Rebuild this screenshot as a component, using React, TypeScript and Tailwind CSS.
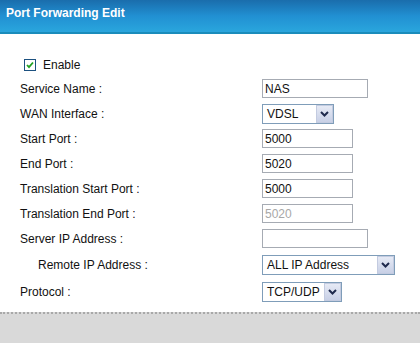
import React from 'react';

const Arrow = () => (
  <div className="w-[17px] h-[18px] border border-[#c3cbe0] bg-gradient-to-b from-[#e6eaf5] to-[#c8d0e6] flex items-center justify-center shrink-0">
    <svg width="9" height="6" viewBox="0 0 9 6">
      <path d="M1 1 L4.5 4.5 L8 1" fill="none" stroke="#1f2a4d" strokeWidth="2" />
    </svg>
  </div>
);

const Sel = ({ value, w }: { value: string; w: string }) => (
  <div className={`h-[20px] ${w} border border-[#7f9db9] bg-white flex items-center justify-between pl-[4px]`}>
    <span className="text-[12px] text-[#111]">{value}</span>
    <Arrow />
  </div>
);

const Inp = ({ value = '', w, disabled = false }: { value?: string; w: string; disabled?: boolean }) => (
  <div className={`h-[19px] ${w} border border-[#a6abb3] bg-white flex items-center pl-[2px]`}>
    <span className={`text-[12px] ${disabled ? 'text-[#a8a8a8]' : 'text-[#111]'}`}>{value}</span>
  </div>
);

const Row = ({ label, h = 'h-[25px]', indent = false, children }: { label: string; h?: string; indent?: boolean; children: React.ReactNode }) => (
  <div className={`flex items-center ${h}`}>
    <span className={`w-[242px] text-[12px] text-[#111] ${indent ? 'pl-[18px]' : ''}`}>{label}</span>
    {children}
  </div>
);

export default function App() {
  return (
    <div className="w-[420px] h-[343px] bg-white flex flex-col overflow-hidden" style={{ fontFamily: '"Liberation Sans", Arial, sans-serif' }}>
      <div className="h-[34px] shrink-0 bg-gradient-to-b from-[#1a6dac] via-[#2190d2] to-[#2aa6dd] border-b-2 border-[#1a8cbb] flex items-center px-[6px] pb-[6px]">
        <span className="text-white text-[12px] font-bold">Port Forwarding Edit</span>
      </div>

      <div className="flex flex-col pl-[20px] pt-[20px]">
        <div className="flex items-center h-[22px] pl-[4px] gap-[7px]">
          <div className="w-[12px] h-[12px] border border-[#1c5180] bg-white flex items-center justify-center">
            <svg width="8" height="8" viewBox="0 0 8 8">
              <path d="M1 4 L3 6.2 L7 1.5" fill="none" stroke="#21a121" strokeWidth="1.8" />
            </svg>
          </div>
          <span className="text-[12px] text-[#111]">Enable</span>
        </div>
        <Row label="Service Name :"><Inp value="NAS" w="w-[106px]" /></Row>
        <Row label="WAN Interface :"><Sel value="VDSL" w="w-[72px]" /></Row>
        <Row label="Start Port :"><Inp value="5000" w="w-[91px]" /></Row>
        <Row label="End Port :"><Inp value="5020" w="w-[91px]" /></Row>
        <Row label="Translation Start Port :"><Inp value="5000" w="w-[91px]" /></Row>
        <Row label="Translation End Port :"><Inp value="5020" w="w-[91px]" disabled /></Row>
        <Row label="Server IP Address :"><Inp w="w-[106px]" /></Row>
        <Row label="Remote IP Address :" h="h-[28px]" indent><Sel value="ALL IP Address" w="w-[133px]" /></Row>
        <Row label="Protocol :" h="h-[25px]"><Sel value="TCP/UDP" w="w-[80px]" /></Row>
      </div>

      <div className="mt-auto h-[31px] bg-[#d9d9d9] border-t-2 border-dotted border-[#a9a9a9]" />
    </div>
  );
}
